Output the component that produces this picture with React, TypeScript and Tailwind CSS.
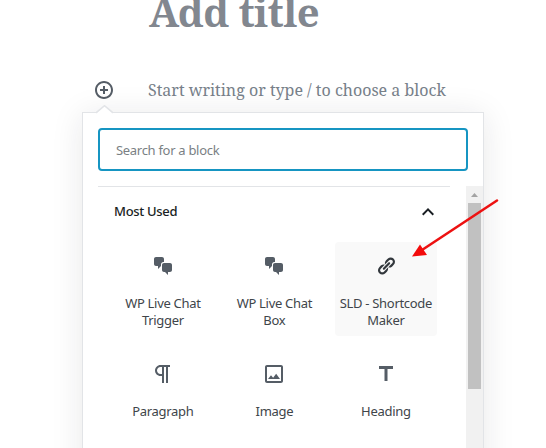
import React from "react";

function Icon({ d, size = 24 }: { d: string; size?: 20 | 24 }) {
  return (
    <svg width={size} height={size} viewBox={`0 0 ${size} ${size}`} fill="currentColor" className="shrink-0">
      <path d={d} />
    </svg>
  );
}

const chat =
  "M11 6h-.82C9.07 6 8 7.2 8 8.16V10l-3 3v-3H3c-1.1 0-2-.9-2-2V3c0-1.1.9-2 2-2h6c1.1 0 2 .9 2 2v3zm0 1h6c1.1 0 2 .9 2 2v5c0 1.1-.9 2-2 2h-2v3l-3-3h-1c-1.1 0-2-.9-2-2V9c0-1.1.9-2 2-2z";
const link =
  "M17.74 2.76c1.68 1.69 1.68 4.41 0 6.1l-1.53 1.52c-1.12 1.12-2.7 1.47-4.14 1.09l2.62-2.61.76-.77.76-.76c.84-.84.84-2.2 0-3.04-.84-.85-2.2-.85-3.04 0l-.77.76-3.38 3.38c-.37-1.44-.02-3.02 1.1-4.14l1.52-1.53c1.69-1.68 4.42-1.68 6.1 0zM8.59 13.43l5.34-5.34c.42-.42.42-1.1 0-1.52-.44-.43-1.13-.39-1.53 0l-5.33 5.34c-.42.42-.42 1.1 0 1.52.44.43 1.13.39 1.52 0zm-.76 2.29l4.14-4.15c.38 1.44.03 3.02-1.09 4.14l-1.52 1.53c-1.69 1.68-4.41 1.68-6.1 0-1.68-1.68-1.68-4.42 0-6.1l1.53-1.52c1.12-1.12 2.7-1.47 4.14-1.1l-4.14 4.15c-.85.84-.85 2.2 0 3.05.84.84 2.2.84 3.04 0z";
const paragraph =
  "M11 5v7H9.5C7.6 12 6 10.4 6 8.5S7.6 5 9.5 5H11m8-2H9.5C6.5 3 4 5.5 4 8.5S6.5 14 9.5 14H11v7h2V5h2v16h2V5h2V3z";
const image =
  "M19 5v14H5V5h14m0-2H5c-1.1 0-2 .9-2 2v14c0 1.1.9 2 2 2h14c1.1 0 2-.9 2-2V5c0-1.1-.9-2-2-2zM14.14 11.86l-3 3.87L9 13.14 6 17h12l-3.86-5.14z";
const heading = "M5 4v3h5.5v12h3V7H19V4z";
const insert =
  "M10 1c-5 0-9 4-9 9s4 9 9 9 9-4 9-9-4-9-9-9zm0 16c-3.9 0-7-3.1-7-7s3.1-7 7-7 7 3.1 7 7-3.1 7-7 7zm1-11H9v3H6v2h3v3h2v-3h3V9h-3V6z";
const chevronUp = "M12 8l-6 6 1.41 1.41L12 10.83l4.59 4.58L18 14z";

type Block = { lines: string[]; d: string; size: 20 | 24; active?: boolean };

const blocks: Block[] = [
  { lines: ["WP Live Chat", "Trigger"], d: chat, size: 20 },
  { lines: ["WP Live Chat", "Box"], d: chat, size: 20 },
  { lines: ["SLD - Shortcode", "Maker"], d: link, size: 20, active: true },
  { lines: ["Paragraph"], d: paragraph, size: 24 },
  { lines: ["Image"], d: image, size: 24 },
  { lines: ["Heading"], d: heading, size: 24 },
];

function BlockTile({ block }: { block: Block }) {
  return (
    <button
      className={`flex h-[94px] w-[102px] flex-col items-center rounded-[4px] ${
        block.active ? "bg-[#f9f9f9] text-[#32373c]" : "text-[#555d66]"
      }`}
    >
      <span className="mt-3 flex h-6 items-center">
        <Icon d={block.d} size={block.size} />
      </span>
      <span className="mt-[17px] text-[13px] leading-[17px] tracking-[-0.3px] whitespace-nowrap text-[#40454a]">
        {block.lines.map((line) => (
          <span key={line} className="block text-center">
            {line}
          </span>
        ))}
      </span>
    </button>
  );
}

export default function App() {
  return (
    <div className="relative h-[448px] w-[546px] overflow-hidden bg-white font-['Noto_Sans','Open_Sans',sans-serif]">
      <div className="flex h-[112px] flex-col font-['Noto_Serif','DejaVu_Serif_Condensed','DejaVu_Serif',serif]">
        <h1 className="-mt-[18px] ml-[149px] h-[60px] text-[40px] leading-[60px] font-bold tracking-[-0.55px] whitespace-nowrap text-[#82878f]">
          Add title
        </h1>
        <div className="mt-[34px] ml-[94px] flex h-7 items-center">
          <span className="text-[#555d66]">
            <Icon d={insert} size={20} />
          </span>
          <p className="ml-[34px] text-[16px] leading-7 whitespace-nowrap text-[#78818a]">
            Start writing or type / to choose a block
          </p>
        </div>
      </div>

      <div className="relative ml-[82px] flex h-[400px] w-[402px] flex-col border border-[#e2e4e7] bg-white shadow-[0_3px_30px_rgba(25,30,35,0.1)]">
        <svg className="absolute -top-[8px] left-[13px]" width="17" height="9" viewBox="0 0 17 9">
          <path d="M0 8.5L8.5 .5L17 8.5V9H0Z" fill="white" />
          <path d="M0 7.8L8.5 .7L17 7.8" fill="none" stroke="#e2e4e7" strokeWidth="1.5" />
        </svg>
        <div className="mx-[15px] mt-[15px] flex h-[43px] w-[370px] shrink-0 items-center rounded-[4px] border-2 border-[#1695c2] px-4">
          <input
            className="mt-[2px] w-full text-[13px] tracking-[-0.3px] outline-none placeholder:text-[#7a7f84]"
            placeholder="Search for a block"
          />
        </div>
        <div className="mt-[15px] flex min-h-0 flex-1">
          <div className="flex w-[383px] flex-col pl-[15px]">
            <div className="flex h-[50px] w-[352px] items-center justify-between border-t border-[#e2e4e7] pr-[10px] pl-4 text-[#191e23]">
              <h2 className="text-[13px] font-medium tracking-[-0.3px]">Most Used</h2>
              <Icon d={chevronUp} />
            </div>
            <div className="mt-[6px] ml-[13.9px] grid grid-cols-[repeat(3,102px)] gap-x-[9.5px] gap-y-[14px]">
              {blocks.map((block, i) => (
                <BlockTile key={i} block={block} />
              ))}
            </div>
          </div>
          <div className="flex w-[17px] flex-col items-center bg-[#f1f1f1]">
            <div className="flex h-[17px] items-center">
              <svg width="7" height="4" viewBox="0 0 7 4">
                <path d="M3.5 0L7 4H0z" fill="#a3a3a3" />
              </svg>
            </div>
            <div className="h-[186px] w-[13px] bg-[#c1c1c1]" />
          </div>
        </div>
      </div>

      <svg className="pointer-events-none absolute top-0 left-0" width="546" height="448" viewBox="0 0 546 448">
        <path d="M497 200.5L422 250" stroke="#ed1111" strokeWidth="2.6" strokeLinecap="round" />
        <path d="M412 256.5L420 244.5L427 255Z" fill="#f30b0b" />
      </svg>
    </div>
  );
}
